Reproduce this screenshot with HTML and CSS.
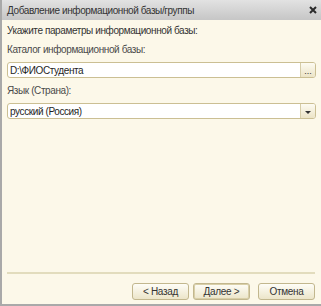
FILE: index.html
```html
<!DOCTYPE html>
<html lang="ru">
<head>
  <meta charset="UTF-8">
  <title>Добавление информационной базы/группы</title>
  <link rel="stylesheet" href="styles.css">
</head>
<body>

  <div class="dialog">
    <div class="title-bar">
      <span class="title">Добавление информационной базы/группы</span>
      <svg class="close" width="8" height="8" viewBox="0 0 8 8">
        <path d="M1 1 L7 7 M7 1 L1 7" stroke="#2b2b2b" stroke-width="2"/>
      </svg>
    </div>

    <div class="content">
      <p class="hint">Укажите параметры информационной базы:</p>

      <label class="field-label">Каталог информационной базы:</label>
      <div class="field">
        <input type="text" value="D:\ФИОСтудента">
        <button class="field-btn dots">...</button>
      </div>

      <label class="field-label">Язык (Страна):</label>
      <div class="field">
        <input type="text" value="русский (Россия)">
        <button class="field-btn"><span class="arrow"></span></button>
      </div>
    </div>

    <div class="footer">
      <div class="separator"></div>
      <div class="buttons">
        <button class="btn">&lt; Назад</button>
        <button class="btn default">Далее &gt;</button>
        <button class="btn cancel">Отмена</button>
      </div>
    </div>
  </div>

</body>
</html>
```

FILE: styles.css
```css
body {
  margin: 0;
  font-family: "Liberation Sans", Arial, sans-serif;
  font-size: 10px;
  letter-spacing: -0.4px;
  background: #fcf8e9;
}

.dialog {
  width: 321px;
  height: 306px;
  box-sizing: border-box;
  display: flex;
  flex-direction: column;
  background: #fcf8e9;
  border-left: 2px solid #a9a9a9;
  border-bottom: 2px solid #a9a9a9;
}

.title-bar {
  height: 20px;
  display: flex;
  align-items: center;
  justify-content: space-between;
  padding: 0 4px 0 5px;
  background: linear-gradient(#e2e2e2, #c6c6c6);
  color: #333;
}

.content {
  flex: 1;
  padding: 4px 5px 0 5px;
  color: #4a4a4a;
}

.hint {
  margin: 0 0 5px;
  line-height: 14px;
  color: #333;
}

.field-label {
  display: block;
  line-height: 14px;
  margin-bottom: 5px;
}

.field {
  display: flex;
  height: 14px;
  margin-bottom: 6px;
  border: 1px solid #cbbf93;
  border-radius: 3px;
  background: #fff;
  overflow: hidden;
}

.field input {
  flex: 1;
  min-width: 0;
  border: none;
  padding: 0 2px;
  font-family: inherit;
  font-size: 10px;
  letter-spacing: -0.4px;
  color: #1e1e1e;
  background: transparent;
  outline: none;
}

.field-btn {
  width: 15px;
  padding: 0;
  border: none;
  border-left: 1px solid #d6cda9;
  background: linear-gradient(#fdfbf2, #ece4c6);
  color: #333;
  font-size: 9px;
  letter-spacing: 0;
  line-height: 9px;
  display: flex;
  align-items: center;
  justify-content: center;
}

.dots {
  align-items: flex-end;
  padding-bottom: 1px;
}

.arrow {
  width: 0;
  height: 0;
  border-left: 3px solid transparent;
  border-right: 3px solid transparent;
  border-top: 3px solid #333;
  position: relative;
  top: 1px;
}

.footer {
  padding: 0 6px 0 5px;
}

.separator {
  height: 2px;
  background: #e2dcbd;
  margin-bottom: 9px;
}

.buttons {
  display: flex;
  justify-content: flex-end;
  gap: 4px;
  margin-bottom: 4px;
}

.btn {
  width: 57px;
  height: 17px;
  padding: 0;
  font-family: inherit;
  font-size: 10px;
  letter-spacing: -0.3px;
  color: #333;
  border: 1px solid #c2b78e;
  border-radius: 3px;
  background: linear-gradient(#fefdf7, #ece5c9);
}

.btn.default {
  box-shadow: inset 0 0 0 1px #d9cfa8;
}

.btn.cancel {
  margin-left: 4px;
}
```
